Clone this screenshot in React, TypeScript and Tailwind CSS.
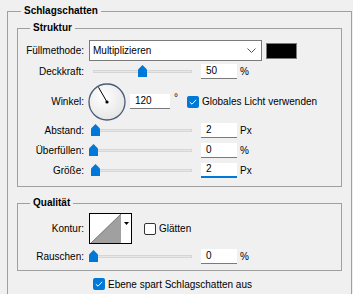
const font = { fontFamily: '"Liberation Sans", Arial, sans-serif' };

const Thumb = () => (
  <svg width="9" height="12" viewBox="0 0 9 12">
    <path d="M0 4.5 L4.5 0 L9 4.5 L9 12 L0 12 Z" fill="#0078d7" />
  </svg>
);

const Slider = ({ value }: { value: number }) => (
  <div className="relative h-[20px] w-[107px] shrink-0">
    <div className="absolute top-[9px] left-[4px] h-[3px] w-[99px] border border-[#d6d6d6] bg-[#e7e7e7]" />
    <div className="absolute top-[4px] flex" style={{ left: Math.round(value * 0.98) }}>
      <Thumb />
    </div>
  </div>
);

const NumInput = ({ value, focused = false, w = 'w-[36px]' }: { value: string; focused?: boolean; w?: string }) => (
  <div
    className={`flex h-[15px] ${w} shrink-0 items-center bg-white pl-[5px] text-[10px] leading-none text-black ${
      focused ? 'border-b-2 border-[#0078d7]' : 'border-b border-[#7a7a7a]'
    }`}>
    {value}
  </div>
);

const Label = ({ children }: { children: string }) => (
  <div className="w-[66px] shrink-0 text-right text-[10px] text-black">{children}</div>
);

const Check = ({ checked }: { checked: boolean }) =>
  checked ? (
    <div className="flex h-[12px] w-[12px] shrink-0 items-center justify-center rounded-[2px] bg-[#0078d7]">
      <svg width="8" height="6" viewBox="0 0 8 6">
        <path d="M0.8 3.2 L3 5.2 L7.2 0.8" fill="none" stroke="white" strokeWidth="1" />
      </svg>
    </div>
  ) : (
    <div className="h-[12px] w-[12px] shrink-0 rounded-[2px] border border-[#333] bg-white" />
  );

const SliderRow = ({ label, value, unit, focused = false }: { label: string; value: number; unit: string; focused?: boolean }) => (
  <div className="flex h-[20px] items-center">
    <Label>{label}</Label>
    <div className="ml-[5px]">
      <Slider value={value} />
    </div>
    <div className="ml-[5px]">
      <NumInput value={String(value)} focused={focused} />
    </div>
    <span className="ml-[3px] text-[10px] text-black">{unit}</span>
  </div>
);

const Dial = () => (
  <svg width="38" height="38" viewBox="0 0 38 38">
    <defs>
      <radialGradient id="dialfill" cx="0.4" cy="0.35" r="0.7">
        <stop offset="0" stopColor="#ffffff" />
        <stop offset="1" stopColor="#e4e4e4" />
      </radialGradient>
    </defs>
    <circle cx="19" cy="19" r="18" fill="url(#dialfill)" stroke="#4b5a78" strokeWidth="1.3" />
    <line x1="19" y1="19" x2="10.5" y2="4.3" stroke="#000" strokeWidth="1" />
    <circle cx="19" cy="19" r="1.6" fill="#000" />
  </svg>
);

const Kontur = () => (
  <div className="flex h-[31px] w-[43px] shrink-0 border border-black bg-white">
    <svg width="31" height="29" viewBox="0 0 31 29">
      <polygon points="1,29 31,0 31,29" fill="#a0a0a0" />
      <line x1="1" y1="29" x2="31" y2="0" stroke="#666" strokeWidth="0.8" />
    </svg>
    <div className="flex flex-1 items-start justify-center pt-[8px]">
      <svg width="5" height="3" viewBox="0 0 5 3">
        <polygon points="0,0 5,0 2.5,3" fill="#000" />
      </svg>
    </div>
  </div>
);

export default function App() {
  return (
    <div className="h-[294px] w-[353px] overflow-hidden bg-[#f0f0f0] pt-[4px] pl-[7px]" style={font}>
      <fieldset className="h-[310px] w-[345px] border border-[#a0a0a0] px-[9px]">
        <legend className="ml-[4px] px-[3px] text-[10px] leading-[14px] font-bold text-black">Schlagschatten</legend>

        <fieldset className="mt-[3px] border border-[#a0a0a0] pb-[6px]">
          <legend className="ml-[12px] px-[3px] text-[10px] leading-[14px] font-bold text-black">Struktur</legend>

          <div className="mt-[5px] flex h-[21px] items-center">
            <Label>Füllmethode:</Label>
            <div className="ml-[5px] flex h-[21px] w-[173px] items-center justify-between border border-[#7a7a7a] bg-white pr-[5px] pl-[3px] text-[10px] text-black">
              Multiplizieren
              <svg width="9" height="5" viewBox="0 0 9 5">
                <polyline points="0.5,0.5 4.5,4.5 8.5,0.5" fill="none" stroke="#555" strokeWidth="1" />
              </svg>
            </div>
            <div className="ml-[4px] h-[16px] w-[31px] border border-[#7a7a7a] bg-black" />
          </div>

          <SliderRow label="Deckkraft:" value={50} unit="%" />

          <div className="mt-[2px] flex h-[37px] items-center">
            <Label>Winkel:</Label>
            <div className="ml-[4px] flex">
              <Dial />
            </div>
            <div className="ml-[4px]">
              <NumInput value="120" w="w-[40px]" />
            </div>
            <span className="mb-[8px] ml-[4px] text-[10px] text-black">°</span>
            <div className="ml-[9px]">
              <Check checked />
            </div>
            <span className="ml-[3px] text-[10px] text-black">Globales Licht verwenden</span>
          </div>

          <SliderRow label="Abstand:" value={2} unit="Px" />
          <SliderRow label="Überfüllen:" value={0} unit="%" />
          <SliderRow label="Größe:" value={2} unit="Px" focused />
        </fieldset>

        <fieldset className="mt-[9px] border border-[#a0a0a0] pb-[4px]">
          <legend className="ml-[12px] px-[3px] text-[10px] leading-[14px] font-bold text-black">Qualität</legend>

          <div className="mt-[3px] flex h-[31px] items-center">
            <Label>Kontur:</Label>
            <div className="ml-[5px]">
              <Kontur />
            </div>
            <div className="ml-[12px]">
              <Check checked={false} />
            </div>
            <span className="ml-[3px] text-[10px] text-black">Glätten</span>
          </div>

          <div className="mt-[2px]">
            <SliderRow label="Rauschen:" value={0} unit="%" />
          </div>
        </fieldset>

        <div className="mt-[6px] flex h-[14px] items-center pl-[76px]">
          <Check checked />
          <span className="ml-[3px] text-[10px] text-black">Ebene spart Schlagschatten aus</span>
        </div>
      </fieldset>
    </div>
  );
}
